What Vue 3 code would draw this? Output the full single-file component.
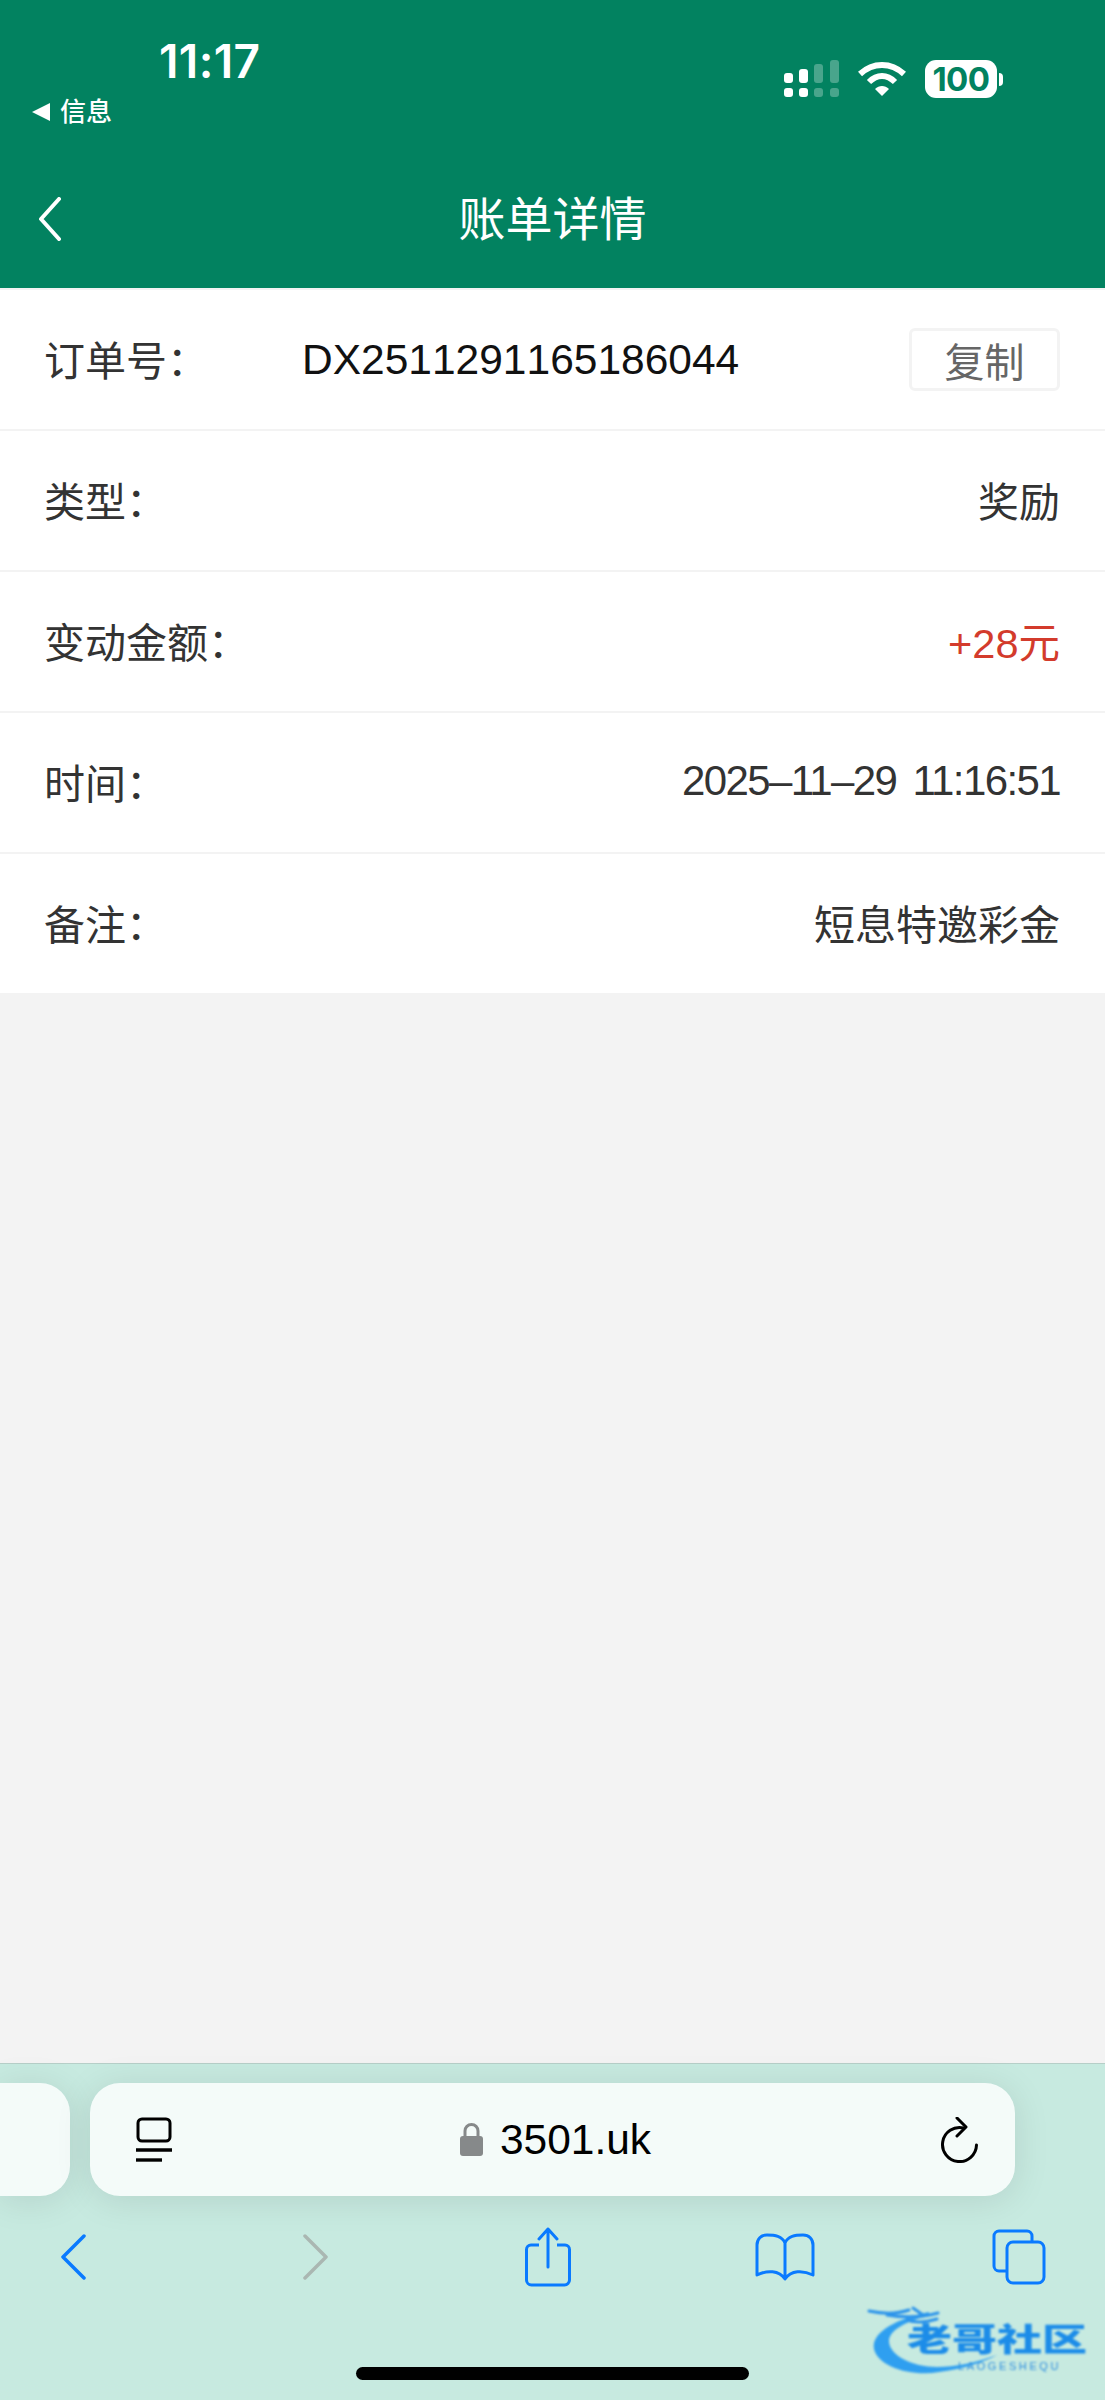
<template>
  <div class="phone">
    <!-- 顶部绿色区域 -->
    <header class="top">
      <div class="status">
        <div class="status-left">
          <div class="clock">11:17</div>
          <div class="back-app"><span class="tri"></span>信息</div>
        </div>
        <div class="status-right">
          <svg class="signal" width="55" height="37" viewBox="0 0 55 37">
            <g fill="#fff">
              <rect x="0" y="13" width="9" height="10" rx="3" />
              <rect x="15" y="9" width="9" height="14" rx="3" />
              <rect x="0" y="28" width="9" height="9" rx="3" />
              <rect x="15" y="28" width="9" height="9" rx="3" />
            </g>
            <g fill="#fff" opacity="0.28">
              <rect x="30" y="4" width="9" height="19" rx="3" />
              <rect x="46" y="0" width="9" height="23" rx="3" />
              <rect x="30" y="28" width="9" height="9" rx="3" />
              <rect x="46" y="28" width="9" height="9" rx="3" />
            </g>
          </svg>
          <svg class="wifi" width="48" height="34" viewBox="0 0 48 34">
            <path d="M2 12 C15 0 33 0 46 12" fill="none" stroke="#fff" stroke-width="6" />
            <path d="M11 20 C19 12 29 12 37 20" fill="none" stroke="#fff" stroke-width="6" />
            <path d="M17 27 C21 23 27 23 31 27 L24 34 Z" fill="#fff" />
          </svg>
          <div class="battery">
            <div class="battery-body">100</div>
            <span class="battery-nub"></span>
          </div>
        </div>
      </div>
      <div class="nav">
        <svg class="nav-back" width="24" height="44" viewBox="0 0 24 44">
          <path d="M21 2 L3 22 L21 42" fill="none" stroke="#fff" stroke-width="4" stroke-linecap="round" stroke-linejoin="round" />
        </svg>
        <div class="nav-title">账单详情</div>
      </div>
    </header>

    <!-- 账单内容 -->
    <main class="content">
      <div class="row">
        <span class="label order-label">订单号：</span>
        <span class="order-no">DX2511291165186044</span>
        <button class="copy-btn">复制</button>
      </div>
      <div v-for="item in rows" :key="item.label" class="row">
        <span class="label">{{ item.label }}：</span>
        <span class="value" :class="item.kind">{{ item.value }}</span>
      </div>
    </main>

    <!-- Safari 底栏 -->
    <footer class="safari">
      <div class="url-row">
        <div class="prev-tab"></div>
        <div class="url-bar">
          <svg class="reader" width="38" height="46" viewBox="0 0 38 46">
            <rect x="3" y="2" width="32" height="22" rx="4" fill="none" stroke="#000" stroke-width="3" />
            <path d="M1 33 H37" stroke="#000" stroke-width="3.4" />
            <path d="M1 43 H27" stroke="#000" stroke-width="3.4" />
          </svg>
          <div class="address">
            <svg width="23" height="33" viewBox="0 0 23 33">
              <path d="M5 15 V8 a6.500 6.500 0 0 1 13 0 V15" fill="none" stroke="#86898a" stroke-width="3" />
              <rect x="0" y="13" width="23" height="20" rx="3" fill="#86898a" />
            </svg>
            <span class="domain">3501.uk</span>
          </div>
          <svg class="reload" width="40" height="46" viewBox="0 0 40 46">
            <path d="M24 8 A17 17 0 1 0 37 25" fill="none" stroke="#000" stroke-width="3" stroke-linecap="round" transform="translate(-0.500 3)" />
            <path d="M17 1 L26 10 L17 19" fill="none" stroke="#000" stroke-width="3" stroke-linecap="round" stroke-linejoin="round" />
          </svg>
        </div>
      </div>
      <div class="tools">
        <svg width="26" height="46" viewBox="0 0 26 46">
          <path d="M24 2 L3 23 L24 44" fill="none" stroke="#0a7aff" stroke-width="3.500" stroke-linecap="round" stroke-linejoin="round" />
        </svg>
        <svg width="26" height="46" viewBox="0 0 26 46">
          <path d="M2 2 L23 23 L2 44" fill="none" stroke="#aab7b2" stroke-width="3.500" stroke-linecap="round" stroke-linejoin="round" />
        </svg>
        <svg width="46" height="60" viewBox="0 0 46 60">
          <path d="M14 18 H6 a4.500 4.500 0 0 0 -4.500 4.500 V53 a5 5 0 0 0 5 5 H39.500 a5 5 0 0 0 5 -5 V22.500 a4.500 4.500 0 0 0 -4.500 -4.500 H32" fill="none" stroke="#0a7aff" stroke-width="3" />
          <path d="M23 2 V40 M14 12 L23 2 L32 12" fill="none" stroke="#0a7aff" stroke-width="3" stroke-linecap="round" stroke-linejoin="round" />
        </svg>
        <svg width="60" height="48" viewBox="0 0 60 48">
          <path d="M30 10 C27 3 20 2 12 2 C6 2 2 6 2 12 V42 C12 37 24 37 30 46 C36 37 48 37 58 42 V12 C58 6 54 2 48 2 C40 2 33 3 30 10 Z M30 10 V46" fill="none" stroke="#0a7aff" stroke-width="3" stroke-linejoin="round" />
        </svg>
        <svg width="54" height="56" viewBox="0 0 54 56">
          <path d="M40 12 V7 a5 5 0 0 0 -5 -5 H7 a5 5 0 0 0 -5 5 V37 a5 5 0 0 0 5 5 H14" fill="none" stroke="#0a7aff" stroke-width="3" />
          <rect x="15" y="13" width="37" height="41" rx="6" fill="none" stroke="#0a7aff" stroke-width="3" />
        </svg>
      </div>
      <div class="home-bar"></div>

      <!-- 水印 -->
      <div class="watermark">
        <svg class="dragon" width="140" height="70" viewBox="0 0 140 70">
          <path d="M62 7 C28 14 4 28 7 44 C11 62 45 72 72 67 C95 64 115 58 130 50 C108 58 88 62 70 62 C45 62 22 50 22 36 C22 26 38 16 62 11 Z" fill="#2f9ff0" />
          <path d="M2 6 C16 9 30 9 42 5 M20 10 C38 13 56 12 71 8 M40 15 C50 19 60 17 70 14 M46 3 L56 10" fill="none" stroke="#2c94ea" stroke-width="3" stroke-linecap="round" />
        </svg>
        <div class="wm-cn">老哥社区</div>
        <div class="wm-en">LAOGESHEQU</div>
      </div>
    </footer>
  </div>
</template>

<script setup>
const rows = [
  { label: '类型', value: '奖励' },
  { label: '变动金额', value: '+28元', kind: 'red' },
  { label: '时间', value: '2025–11–29 11:16:51', kind: 'datetime' },
  { label: '备注', value: '短息特邀彩金' }
];
</script>

<style>
html, body {
  margin: 0;
  background: #f3f3f3;
}
</style>

<style scoped>
.phone {
  width: 1105px;
  height: 2400px;
  display: flex;
  flex-direction: column;
  overflow: hidden;
  background: #f3f3f3;
  font-family: "Liberation Sans", "Noto Sans CJK SC", sans-serif;
}

.top {
  height: 288px;
  flex: none;
  background: #028260;
  color: #fff;
}

.status {
  height: 132px;
  display: flex;
  justify-content: space-between;
}

.status-left {
  padding: 37px 0 0 32px;
}

.clock {
  margin-left: 127px;
  font-family: Inter, sans-serif;
  font-size: 46px;
  font-weight: 600;
  line-height: 48px;
  letter-spacing: 0.4px;
}

.back-app {
  display: flex;
  align-items: center;
  gap: 10px;
  margin-top: 12px;
  font-size: 26px;
  font-weight: 500;
  line-height: 30px;
}

.tri {
  width: 0;
  height: 0;
  border-top: 9px solid transparent;
  border-bottom: 9px solid transparent;
  border-right: 18px solid #fff;
}

.status-right {
  display: flex;
  align-items: flex-start;
  padding: 60px 102px 0 0;
}

.wifi {
  margin: 2px 19px 0 19px;
}

.battery {
  display: flex;
  align-items: center;
}

.battery-body {
  width: 72px;
  height: 38px;
  border-radius: 11px;
  background: #fff;
  color: #028260;
  font-family: Inter, sans-serif;
  font-size: 33px;
  font-weight: 700;
  line-height: 38px;
  text-align: center;
  letter-spacing: -0.5px;
}

.battery-nub {
  width: 4px;
  height: 13px;
  margin-left: 2px;
  border-radius: 0 4px 4px 0;
  background: #fff;
}

.nav {
  height: 156px;
  display: flex;
  align-items: center;
  position: relative;
  justify-content: center;
}

.nav-back {
  position: absolute;
  left: 38px;
  top: 65px;
}

.nav-title {
  font-size: 47px;
  line-height: 60px;
  margin-top: 20px;
}

.content {
  flex: 1;
  padding-top: 2px;
  background: #f3f3f3;
}

.row {
  height: 139px;
  display: flex;
  align-items: center;
  padding: 0 45px 0 44px;
  background: #fff;
  border-bottom: 2.500px solid #f3f3f3;
  color: #333;
  font-size: 41px;
}

.row:last-child {
  border-bottom: none;
}

.label,
.value {
  margin-bottom: 3px;
}

.label {
  margin-right: auto;
}

.order-label {
  width: 258px;
  margin-right: 0;
  flex: none;
}

.order-no {
  flex: 1;
  color: #111;
  font-size: 42.500px;
  font-kerning: none;
}

.value.red {
  color: #d33b2c;
  font-size: 41.500px;
}

.value.datetime {
  font-size: 42px;
  letter-spacing: -1.600px;
  word-spacing: 6px;
}

.copy-btn {
  width: 151px;
  height: 63px;
  padding: 0;
  border: 3px solid #f3f3f3;
  border-radius: 6px;
  background: #fff;
  color: #666;
  font-family: inherit;
  font-size: 40px;
}

.safari {
  height: 337px;
  flex: none;
  position: relative;
  box-sizing: border-box;
  border-top: 1.500px solid #b6cfc8;
  background: #c7eae0;
}

.url-row {
  display: flex;
  gap: 20px;
  padding-top: 19px;
}

.prev-tab {
  width: 70px;
  height: 113px;
  flex: none;
  border-radius: 0 30px 30px 0;
  background: #f4fbf9;
  box-shadow: 0 4px 36px rgba(0, 0, 0, 0.1);
}

.url-bar {
  width: 925px;
  height: 113px;
  flex: none;
  display: flex;
  align-items: center;
  justify-content: space-between;
  box-sizing: border-box;
  padding: 0 35px 0 45px;
  border-radius: 30px;
  background: #f4fbf9;
  box-shadow: 0 4px 36px rgba(0, 0, 0, 0.1);
}

.address {
  display: flex;
  align-items: center;
  gap: 17px;
  margin-left: -2px;
}

.domain {
  color: #000;
  font-size: 42.500px;
  line-height: 50px;
}

.tools {
  display: grid;
  grid-template-columns: 243px 222px 230px 237px 54px;
  align-items: center;
  padding: 31px 0 0 60px;
}

.home-bar {
  position: absolute;
  left: 356px;
  bottom: 20px;
  width: 393px;
  height: 13px;
  border-radius: 7px;
  background: #000;
}

.watermark {
  position: absolute;
  left: 867px;
  top: 241px;
  width: 224px;
  height: 70px;
  filter: blur(1px);
}

.dragon {
  position: absolute;
  left: 0;
  top: 0;
}

.wm-cn {
  position: absolute;
  left: 40px;
  top: 19px;
  font-size: 45px;
  font-weight: 900;
  line-height: 48px;
  white-space: nowrap;
  color: #1c8ce8;
  transform: scaleY(0.7);
  transform-origin: top left;
}

.wm-en {
  position: absolute;
  left: 91px;
  top: 55px;
  color: #2f8fe0;
  font-size: 11px;
  letter-spacing: 2.600px;
  line-height: 13px;
}
</style>
